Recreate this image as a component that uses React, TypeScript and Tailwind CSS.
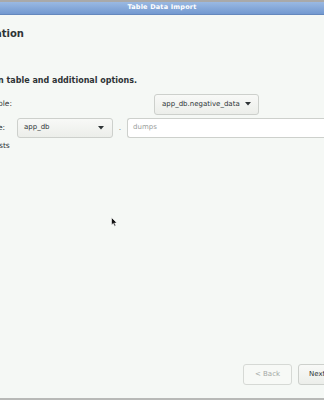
import React from "react";

const font = { fontFamily: '"DejaVu Sans", "Liberation Sans", sans-serif' };

function Caret() {
  return (
    <svg width="6" height="4" viewBox="0 0 6 4" className="shrink-0">
      <path d="M0 0 L6 0 L3 3.5 Z" fill="#2e3436" />
    </svg>
  );
}

export default function App() {
  return (
    <div className="w-[324px] h-[400px] overflow-hidden flex flex-col bg-[#f5f8f5] text-[#2e3436]" style={font}>
      <div className="h-[2px] bg-[#a9a9a9]" />
      <div className="h-[13px] flex items-center justify-center bg-gradient-to-b from-[#9ab9e2] to-[#7399d0] border-b border-[#6488bd]">
        <span className="text-[6.5px] font-bold text-white tracking-[0.2px]">Table Data Import</span>
      </div>

      <div className="flex-1 flex flex-col relative">
        <div className="mt-[12px] -ml-[5px] text-[10px] font-bold leading-[14px]">ation</div>

        <div className="mt-[34px] -ml-[2px] text-[8px] font-bold leading-[12px]">n table and additional options.</div>

        <div className="mt-[6px] flex items-center h-[22px]">
          <span className="-ml-[2px] text-[7.5px] w-[156px]">ble:</span>
          <button className="h-[21px] px-[7px] flex items-center gap-[5px] rounded-[3px] border border-[#cdd0cc] bg-gradient-to-b from-[#f8f9f7] to-[#eceeea] text-[7px]">
            <span>app_db.negative_data</span>
            <Caret />
          </button>
        </div>

        <div className="mt-[2px] flex items-center h-[21px]">
          <span className="-ml-[2px] text-[7.5px] w-[19px]">e:</span>
          <button className="w-[96px] h-[20px] pl-[6px] pr-[8px] flex items-center justify-between rounded-[3px] border border-[#cdd0cc] bg-gradient-to-b from-[#f8f9f7] to-[#eceeea] text-[7px]">
            <span>app_db</span>
            <Caret />
          </button>
          <span className="w-[14px] text-center text-[7.5px] text-[#7a7f7c]">.</span>
          <div className="flex-1 h-[20px] pl-[5px] flex items-center rounded-l-[3px] border border-r-0 border-[#cdd0cc] bg-white text-[7px] text-[#9a9e9b]">
            dumps
          </div>
        </div>

        <div className="mt-[2px] -ml-[1px] text-[7.5px] leading-[12px]">sts</div>

        <svg width="8" height="12" viewBox="0 0 8 12" className="absolute left-[111px] top-[202px]">
          <path d="M0.5 0.5 L0.5 8 L2.3 6.4 L3.6 9.3 L4.8 8.8 L3.6 6 L6 6 Z" fill="#111" stroke="#fff" strokeWidth="0.6" />
        </svg>

        <div className="mt-auto mb-[13px] flex justify-end gap-[6px] -mr-[20px]">
          <button className="w-[49px] h-[21px] rounded-[3px] border border-[#d6d9d5] bg-[#f7f9f6] text-[7px] text-[#a3a7a4]">&lt; Back</button>
          <button className="w-[46px] h-[21px] rounded-[3px] border border-[#cdd0cc] bg-gradient-to-b from-[#f8f9f7] to-[#eceeea] text-[7px] text-[#2e3436] text-left pl-[10px]">Next</button>
        </div>
      </div>
      <div className="h-[2px] bg-[#b8b9b7]" />
    </div>
  );
}
